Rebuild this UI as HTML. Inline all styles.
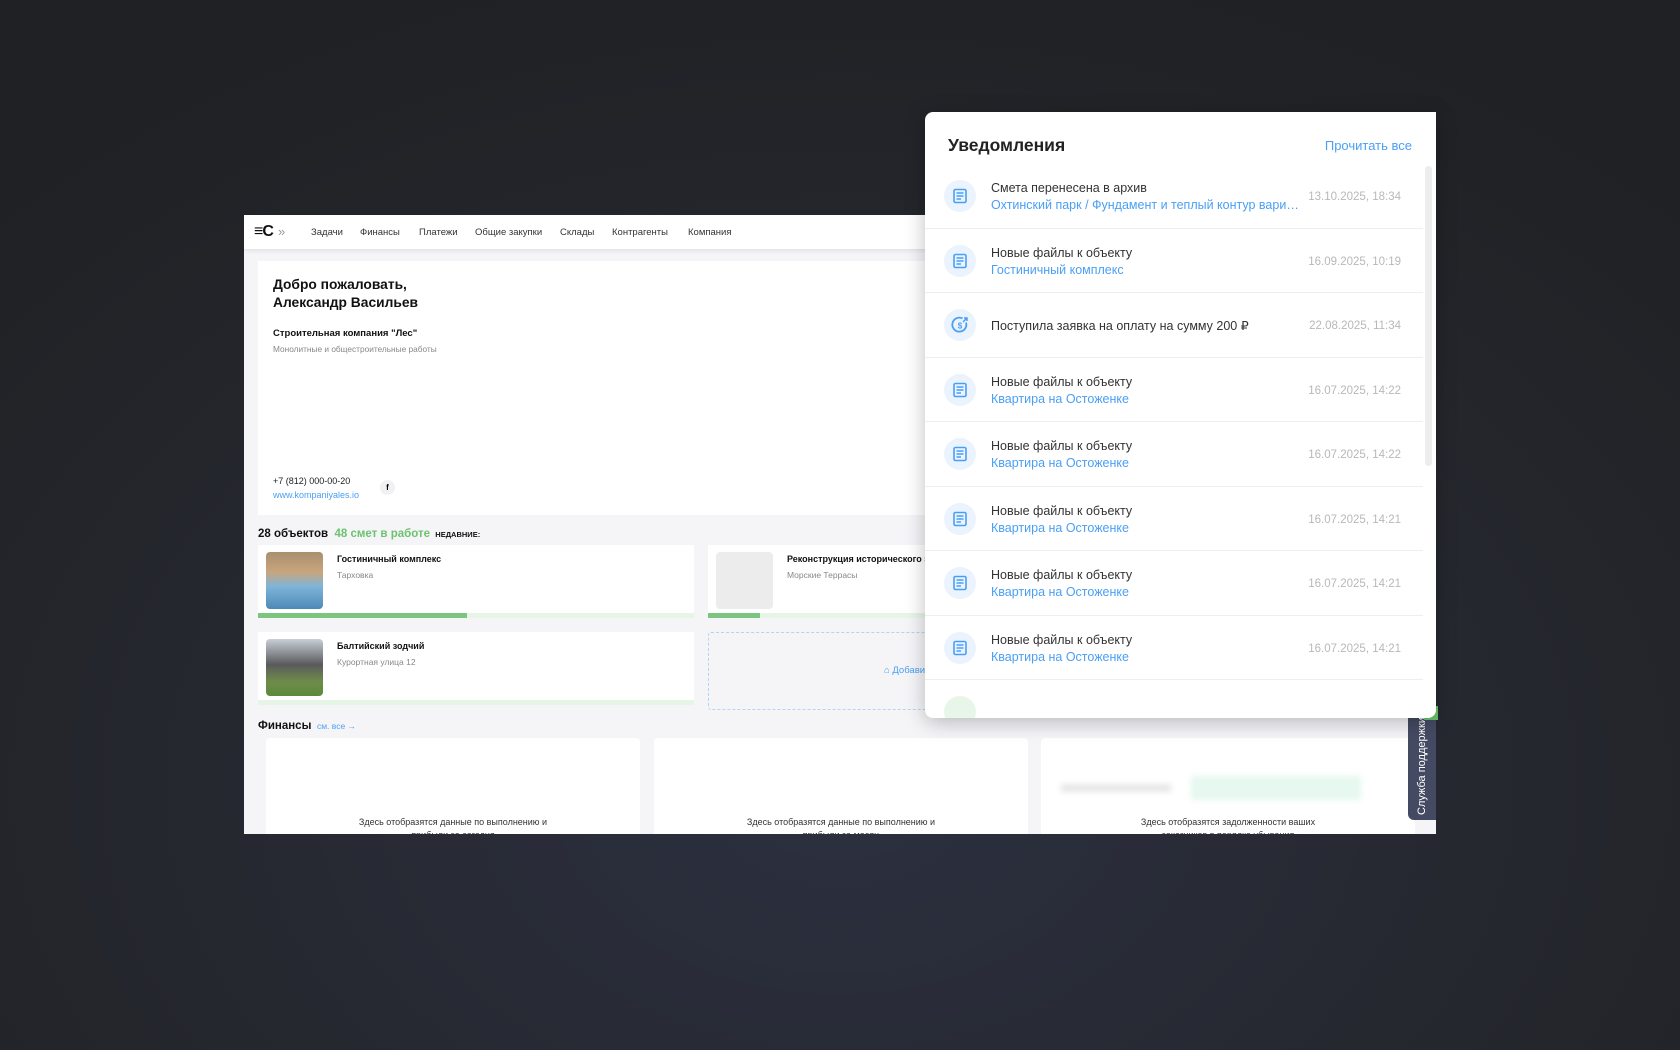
<!DOCTYPE html>
<html><head><meta charset="utf-8"><style>
*{box-sizing:border-box;margin:0;padding:0}
body{width:1680px;height:1050px;overflow:hidden;font-family:"Liberation Sans","DejaVu Sans",sans-serif;background:radial-gradient(ellipse 70% 80% at 50% 75%,#2c3040 0%,#25272e 60%,#202124 100%);position:relative}
.abs{position:absolute}
.win{left:244px;top:215px;width:1192px;height:619px;background:#f5f5f8;overflow:hidden}
.nav{left:0;top:0;width:100%;height:34px;background:#fff;box-shadow:0 2px 4px rgba(0,0,0,.08)}
.nav span{position:absolute;top:12px;font-size:9.5px;color:#333}
.card{background:#fff;position:absolute}
.t{position:absolute;white-space:nowrap}
.notif{left:925px;top:112px;width:511px;height:606px;background:#fff;border-radius:8px 0 8px 8px;box-shadow:0 4px 20px rgba(0,0,0,.25);overflow:hidden}
.row{position:absolute;left:0;width:498px;height:64.5px;border-bottom:1px solid #eceef1}
.ic{position:absolute;left:19px;top:16px;width:32px;height:32px;border-radius:50%;background:#eaf3fe}
.ttl{position:absolute;left:66px;font-size:12.5px;color:#333}
.sub{position:absolute;left:66px;font-size:12.5px;color:#4a9ff5;max-width:314px;overflow:hidden;text-overflow:ellipsis;white-space:nowrap}
.dt{position:absolute;right:22px;font-size:11.5px;color:#b8b8b8}
</style></head><body>
<div class="abs win">
 <div class="abs nav">
  <div class="t" style="left:10px;top:8px;font-size:16px;font-weight:bold;color:#111;letter-spacing:-1px">≡C</div>
  <div class="t" style="left:34px;top:9px;font-size:13px;color:#999">»</div>
  <span style="left:67px">Задачи</span><span style="left:116px">Финансы</span><span style="left:175px">Платежи</span><span style="left:231px">Общие закупки</span><span style="left:316px">Склады</span><span style="left:368px">Контрагенты</span><span style="left:444px">Компания</span>
 </div>
 <div class="card" style="left:14px;top:46px;width:1164px;height:254px">
  <div class="t" style="left:15px;top:15px;font-size:13.8px;font-weight:bold;color:#111;line-height:18px">Добро пожаловать,<br>Александр Васильев</div>
  <div class="t" style="left:15px;top:67px;font-size:9.5px;font-weight:bold;color:#111">Строительная компания "Лес"</div>
  <div class="t" style="left:15px;top:83px;font-size:8.3px;color:#888">Монолитные и общестроительные работы</div>
  <div class="t" style="left:15px;top:215px;font-size:9px;color:#222">+7 (812) 000-00-20</div>
  <div class="t" style="left:15px;top:229px;font-size:9px;color:#4a9ff5">www.kompaniyales.io</div>
  <div class="abs" style="left:122px;top:219px;width:15px;height:15px;border-radius:50%;background:#f1f1f3;font-size:8px;font-weight:bold;text-align:center;line-height:15px">f</div>
 </div>
 <div class="t" style="left:14px;top:313px;font-size:11.5px;font-weight:bold;color:#111">28 объектов <span style="color:#6cc36f">&nbsp;48 смет в работе</span> <span style="font-size:7.5px">&nbsp;НЕДАВНИЕ:</span></div>
 <div class="card" style="left:14px;top:330px;width:436px;height:73px">
  <div class="abs" style="left:8px;top:7px;width:57px;height:57px;border-radius:4px;background:linear-gradient(180deg,#a98f6f 0%,#c9a57d 35%,#7fb5d8 60%,#4d88b8 100%)"></div>
  <div class="t" style="left:79px;top:9px;font-size:9px;font-weight:bold;color:#111">Гостиничный комплекс</div>
  <div class="t" style="left:79px;top:25px;font-size:8.5px;color:#888">Тарховка</div>
  <div class="abs" style="left:0;bottom:0;width:100%;height:5px;background:#e7f5e7"><div style="width:48%;height:100%;background:#7cc57f"></div></div>
 </div>
 <div class="card" style="left:464px;top:330px;width:436px;height:73px">
  <div class="abs" style="left:8px;top:7px;width:57px;height:57px;border-radius:4px;background:#ececec"></div>
  <div class="t" style="left:79px;top:9px;font-size:9px;font-weight:bold;color:#111">Реконструкция исторического здания</div>
  <div class="t" style="left:79px;top:25px;font-size:8.5px;color:#888">Морские Террасы</div>
  <div class="abs" style="left:0;bottom:0;width:100%;height:5px;background:#e7f5e7"><div style="width:12%;height:100%;background:#7cc57f"></div></div>
 </div>
 <div class="card" style="left:14px;top:417px;width:436px;height:73px">
  <div class="abs" style="left:8px;top:7px;width:57px;height:57px;border-radius:4px;background:linear-gradient(180deg,#c8cfd6 0%,#5a5a5c 45%,#6e8c4a 75%,#5c8a3a 100%)"></div>
  <div class="t" style="left:79px;top:9px;font-size:9px;font-weight:bold;color:#111">Балтийский зодчий</div>
  <div class="t" style="left:79px;top:25px;font-size:8.5px;color:#888">Курортная улица 12</div>
  <div class="abs" style="left:0;bottom:0;width:100%;height:5px;background:#e7f5e7"></div>
 </div>
 <div class="abs" style="left:464px;top:417px;width:436px;height:78px;border:1px dashed #b5d3f2;border-radius:3px">
  <div class="t" style="left:175px;top:32px;font-size:9.5px;color:#4a9ff5">⌂ Добавить объект</div>
 </div>
 <div class="t" style="left:14px;top:505px;font-size:11.5px;font-weight:bold;color:#111">Финансы <span style="font-size:8.5px;color:#4a9ff5;font-weight:normal">&nbsp;см. все →</span></div>
 <div class="card" style="left:22px;top:523px;width:374px;height:110px;border-radius:4px"><div class="t" style="left:0;width:100%;text-align:center;top:78px;font-size:9px;color:#333;line-height:13px">Здесь отобразятся данные по выполнению и<br>прибыли за сегодня</div></div>
 <div class="card" style="left:410px;top:523px;width:374px;height:110px;border-radius:4px"><div class="t" style="left:0;width:100%;text-align:center;top:78px;font-size:9px;color:#333;line-height:13px">Здесь отобразятся данные по выполнению и<br>прибыли за месяц</div></div>
 <div class="card" style="left:797px;top:523px;width:374px;height:110px;border-radius:4px">
  <div class="abs" style="left:150px;top:38px;width:170px;height:24px;background:#e6f8ef;filter:blur(3px)"></div>
  <div class="abs" style="left:20px;top:46px;width:110px;height:8px;background:#e6e6e6;filter:blur(3px)"></div>
  <div class="t" style="left:0;width:100%;text-align:center;top:78px;font-size:9px;color:#333;line-height:13px">Здесь отобразятся задолженности ваших<br>заказчиков в порядке убывания</div></div>
</div>
<div class="abs" style="left:1408px;top:712px;width:28px;height:108px;background:#454a63;border-radius:6px 0 0 6px"><div class="t" style="left:14px;top:54px;transform:translate(-50%,-50%) rotate(-90deg);font-size:11px;color:#fff">Служба поддержки</div></div>
<div class="abs" style="left:1424px;top:706px;width:14px;height:14px;background:#6cc36f;border-radius:14px 0 0 0"></div>
<div class="abs notif">
 <div class="t" style="left:23px;top:23px;font-size:17.5px;font-weight:bold;color:#222">Уведомления</div>
 <div class="t" style="right:24px;top:26px;font-size:13px;color:#4a9ff5">Прочитать все</div>
 <div class="abs" style="left:500px;top:54px;width:7px;height:300px;border-radius:4px;background:#ededed"></div>
 <div id="rows"></div>
</div>
<script>
var doc='<svg width="32" height="32" viewBox="0 0 32 32"><rect x="10" y="9.5" width="12" height="13" rx="1.5" fill="none" stroke="#4a9ff5" stroke-width="1.6"/><path d="M12.5 13h7M12.5 16h7M12.5 19h4.5" stroke="#4a9ff5" stroke-width="1.5"/></svg>';
var money='<svg width="32" height="32" viewBox="0 0 32 32"><path d="M22 13.5A7 7 0 1 1 18.5 9.4" fill="none" stroke="#4a9ff5" stroke-width="1.8"/><path d="M19 13l4-4M20 9h3v3" fill="none" stroke="#4a9ff5" stroke-width="1.5"/><text x="16" y="19.5" font-size="8" font-weight="bold" fill="#4a9ff5" text-anchor="middle" font-family="Liberation Sans">$</text></svg>';
var d=[["Смета перенесена в архив","Охтинский парк / Фундамент и теплый контур вариант 2","13.10.2025, 18:34",doc],
["Новые файлы к объекту","Гостиничный комплекс","16.09.2025, 10:19",doc],
["Поступила заявка на оплату на сумму 200 ₽","","22.08.2025, 11:34",money],
["Новые файлы к объекту","Квартира на Остоженке","16.07.2025, 14:22",doc],
["Новые файлы к объекту","Квартира на Остоженке","16.07.2025, 14:22",doc],
["Новые файлы к объекту","Квартира на Остоженке","16.07.2025, 14:21",doc],
["Новые файлы к объекту","Квартира на Остоженке","16.07.2025, 14:21",doc],
["Новые файлы к объекту","Квартира на Остоженке","16.07.2025, 14:21",doc]];
var h='';
d.forEach(function(r,i){var top=52+i*64.5;
h+='<div class="row" style="top:'+top+'px"><div class="ic">'+r[3]+'</div>'+
(r[1]?'<div class="ttl" style="top:17px">'+r[0]+'</div><div class="sub" style="top:34px">'+r[1]+'</div>':'<div class="ttl" style="top:25px">'+r[0]+'</div>')+
'<div class="dt" style="top:27px">'+r[2]+'</div></div>';});
h+='<div class="row" style="top:568px;border:0"><div class="ic" style="background:#e8f6ea"></div></div>';
document.getElementById('rows').innerHTML=h;
</script>
</body></html>
